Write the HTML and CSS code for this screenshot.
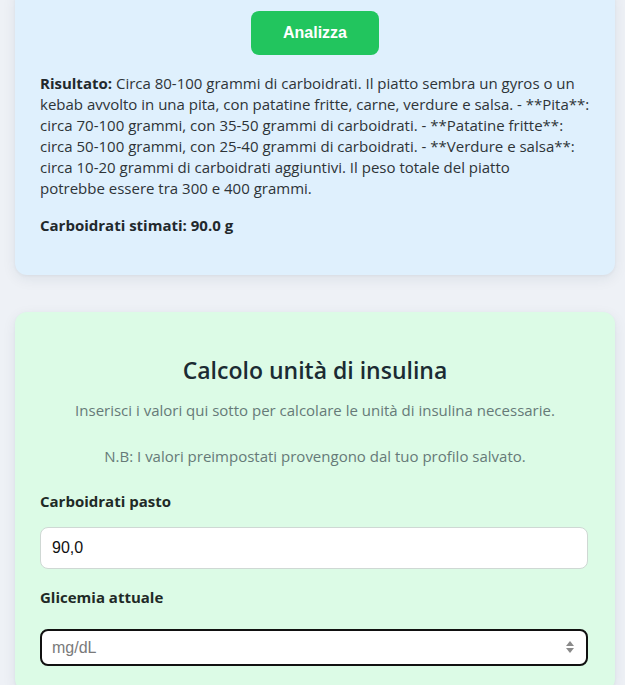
FILE: index.html
```html
<!DOCTYPE html>
<html lang="it">
<head>
<meta charset="utf-8">
<title>Calcolo carboidrati</title>
<link rel="stylesheet" href="styles.css">
</head>
<body>
<main class="page">
  <section class="card card-blue">
    <div class="btn-row"><button class="btn-analizza" type="button">Analizza</button></div>
    <p class="result"><strong>Risultato:</strong> Circa 80-100 grammi di carboidrati. Il piatto sembra un gyros o un kebab avvolto in una pita, con patatine fritte, carne, verdure e salsa. - **Pita**: circa 70-100 grammi, con 35-50 grammi di carboidrati. - **Patatine fritte**: circa 50-100 grammi, con 25-40 grammi di carboidrati. - **Verdure e salsa**: circa 10-20 grammi di carboidrati aggiuntivi. Il peso totale del piatto potrebbe&nbsp;essere tra 300 e 400 grammi.</p>
    <p class="estimate"><strong>Carboidrati stimati: 90.0 g</strong></p>
  </section>

  <section class="card card-green">
    <h2 class="title">Calcolo unità di insulina</h2>
    <p class="subtitle">Inserisci i valori qui sotto per calcolare le unità di insulina necessarie.</p>
    <p class="note">N.B: I valori preimpostati provengono dal tuo profilo salvato.</p>

    <label class="field-label" for="carbs">Carboidrati pasto</label>
    <input class="field-input" id="carbs" type="text" value="90,0">

    <label class="field-label field-label-2" for="gly">Glicemia attuale</label>
    <div class="input-wrap">
      <input class="field-input field-focus" id="gly" type="text" placeholder="mg/dL">
      <svg class="spinner" width="10" height="14" viewBox="0 0 10 14" aria-hidden="true">
        <path d="M5 1 L9 6 L1 6 Z" fill="#8a8a8a"/>
        <path d="M1 8 L9 8 L5 13 Z" fill="#8a8a8a"/>
      </svg>
    </div>
  </section>
</main>
</body>
</html>
```

FILE: styles.css
```css
* { box-sizing: border-box; }

html, body {
  margin: 0;
  padding: 0;
  background: #eef1f6;
  overflow: hidden;
}

body {
  font-family: "Open Sans", "Noto Sans", sans-serif;
  font-size: 15px;
  line-height: 21px;
  color: #2e3438;
}

.page {
  width: 600px;
  margin: -14px 0 0 15px;
  display: flex;
  flex-direction: column;
  gap: 37px;
}

.card {
  border-radius: 12px;
  padding: 25px;
  box-shadow: 0 4px 14px rgba(30, 50, 80, 0.08), 0 1px 3px rgba(30, 50, 80, 0.05);
}

.card-blue { background: #dff0fd; }
.card-green { background: #dcfbe6; }

.btn-row {
  display: flex;
  justify-content: center;
}

.btn-analizza {
  font-family: "Liberation Sans", Arial, sans-serif;
  font-weight: 700;
  font-size: 16px;
  line-height: 20px;
  color: #ffffff;
  background: #22c55e;
  border: none;
  border-radius: 8px;
  padding: 12px 0;
  width: 128px;
}

.result {
  margin: 18px 0 0;
}

.result strong, .estimate strong {
  color: #22282c;
}

.estimate {
  margin: 16px 0 14px;
}

.title {
  margin: 17px 0 0;
  text-align: center;
  font-size: 23px;
  line-height: 32px;
  font-weight: 600;
  color: #1b2b33;
}

.subtitle, .note {
  text-align: center;
  color: #667a78;
}

.subtitle { margin: 14px 0 0; }
.note { margin: 25px 0 0; }

.field-label {
  display: block;
  font-weight: 700;
  color: #1f2a26;
  margin-top: 24px;
}

.field-label-2 { margin-top: 18px; }

.field-input {
  display: block;
  width: 548px;
  height: 42px;
  margin-top: 15px;
  padding: 0 11px;
  font-family: "Liberation Sans", Arial, sans-serif;
  font-size: 16px;
  color: #111;
  background: #fff;
  border: 1px solid #cfd8d4;
  border-radius: 8px;
  outline: none;
}

.input-wrap {
  position: relative;
  width: 548px;
  margin-top: 21px;
}

.input-wrap .field-input { margin-top: 0; }

.field-focus {
  height: 37px;
  border: 2px solid #111;
  padding: 0 10px;
}

.field-focus::placeholder { color: #7a7a7a; }

.spinner {
  position: absolute;
  right: 13px;
  top: 11px;
}
```
